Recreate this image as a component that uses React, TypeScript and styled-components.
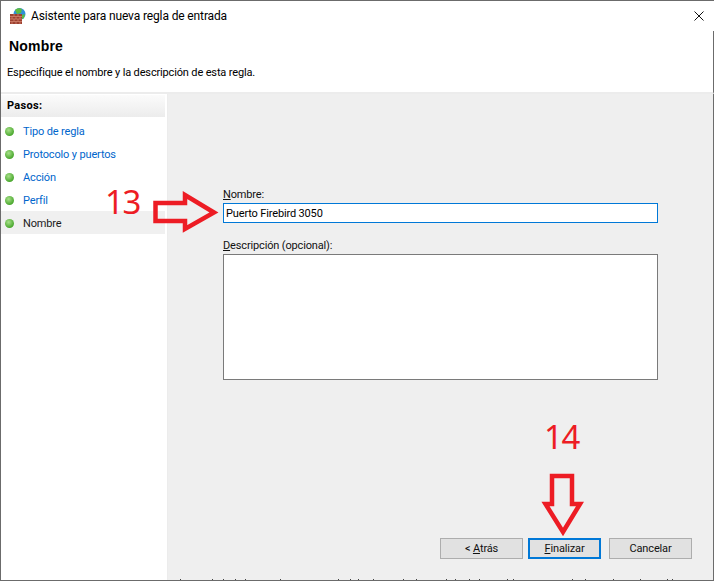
import styled, { createGlobalStyle } from "styled-components";

const Global = createGlobalStyle`
  html, body { margin: 0; padding: 0; background: #fff; }
  #root { width: 714px; height: 581px; }
`;

const Win = styled.div`
  position: relative;
  box-sizing: border-box;
  width: 714px;
  height: 581px;
  border: 1px solid #6b6b6b;
  border-right: none;
  background: #fff;
  display: flex;
  flex-direction: column;
  overflow: hidden;
  font-family: "Roboto", "Liberation Sans", sans-serif;
  font-size: 11px;
  letter-spacing: -0.15px;
  color: #000;
`;

const TitleBar = styled.div`
  height: 30px;
  display: flex;
  align-items: center;
  padding-left: 9px;
  gap: 4px;
`;

const TitleText = styled.span`
  font-size: 12px;
  letter-spacing: -0.13px;
  color: #000;
  flex: 1;
`;

const Close = styled.div`
  width: 30px;
  height: 30px;
  display: flex;
  align-items: center;
  justify-content: center;
`;

const Header = styled.div`
  height: 63px;
  box-sizing: border-box;
  padding: 6px 0 0 8px;
  border-bottom: 2px solid #ececec;
  border-right: 1px solid #6b6b6b;
`;

const Heading = styled.div`
  font-family: "Liberation Sans", sans-serif;
  font-weight: 700;
  font-size: 14px;
  letter-spacing: 0.2px;
  line-height: 18px;
`;

const SubHeading = styled.div`
  margin: 10px 0 0 -2px;
  line-height: 16px;
`;

const Body = styled.div`
  flex: 1;
  display: flex;
  min-height: 0;
  border-right: 1px solid #6b6b6b;
`;

const Side = styled.div`
  width: 164px;
  padding: 1px 2px 0 0;
  border-right: 1px solid #ececec;
`;

const SideTitle = styled.div`
  height: 22px;
  box-sizing: border-box;
  padding: 3px 0 0 6px;
  font-weight: 700;
  letter-spacing: 0.3px;
  line-height: 16px;
  background: linear-gradient(#fbfbfb, #ececec);
`;

const Steps = styled.div`
  padding-top: 2px;
`;

const Step = styled.div<{ $current?: boolean }>`
  box-sizing: border-box;
  height: 23px;
  display: flex;
  align-items: center;
  gap: 9px;
  padding: 2px 0 0 4px;
  background: ${(p) => (p.$current ? "#f0f0f0" : "transparent")};
  color: ${(p) => (p.$current ? "#1a1a1a" : "#0066cc")};
`;

const Dot = styled.span`
  width: 9px;
  height: 9px;
  border-radius: 50%;
  background: radial-gradient(circle at 40% 35%, #a8e08a, #4aa82e 70%);
`;

const Main = styled.div`
  flex: 1;
  background: #efefef;
  display: flex;
  flex-direction: column;
  padding: 93px 0 0 55px;
`;

const Label = styled.label`
  line-height: 16px;
  color: #111;
`;

const NameBox = styled.div`
  box-sizing: border-box;
  width: 435px;
  height: 20px;
  border: 1px solid #0078d7;
  background: #fff;
  padding: 1px 0 0 2px;
  line-height: 17px;
`;

const DescLabel = styled(Label)`
  margin-top: 15px;
`;

const DescBox = styled.div`
  box-sizing: border-box;
  width: 435px;
  height: 126px;
  border: 1px solid #7a7a7a;
  background: #fff;
`;

const Buttons = styled.div`
  display: flex;
  margin: 158px 0 0 217px;
`;

const Btn = styled.div<{ $primary?: boolean }>`
  box-sizing: border-box;
  width: ${(p) => (p.$primary ? "73px" : "83px")};
  height: 21px;
  margin: ${(p) => (p.$primary ? "0 8px 0 5px" : "0")};
  border: ${(p) => (p.$primary ? "2px solid #0078d7" : "1px solid #adadad")};
  background: #e1e1e1;
  display: flex;
  align-items: center;
  justify-content: center;
  white-space: pre;
  color: #111;
`;

const Number = styled.div<{ $x: number; $y: number }>`
  position: absolute;
  left: ${(p) => p.$x}px;
  top: ${(p) => p.$y}px;
  font-family: "Noto Sans", sans-serif;
  font-size: 33px;
  line-height: 40px;
  letter-spacing: -1.5px;
  color: #ed1c24;
`;

const Overlay = styled.svg`
  position: absolute;
  left: -1px;
  top: -1px;
  pointer-events: none;
`;

const Icon = () => (
  <svg width="17" height="16" viewBox="0 0 17 16">
    <circle cx="9.5" cy="6" r="6" fill="#2f8fd8" />
    <path d="M5 2c2-2 5-2 7-1l-1 4-4 1zM12 7l3-1-1 4-2 1z" fill="#5dbb3f" />
    <rect x="0" y="6" width="12" height="10" fill="#9c4030" />
    <path d="M0 8.5h12M0 11h12M0 13.5h12M4 6v2.5M8 6v2.5M2 8.5V11M6 8.5V11M10 8.5V11M4 11v2.5M8 11v2.5M2 13.5V16M6 13.5V16M10 13.5V16" stroke="#d98a74" strokeWidth=".7" fill="none" />
  </svg>
);

const ticks = [180, 212, 223, 235, 245, 280, 338, 350, 358, 373, 403, 416, 446, 455, 469, 479, 507, 513, 572, 585, 613, 640, 667, 672];

export default function App() {
  return (
    <>
      <Global />
      <Win>
        <TitleBar>
          <Icon />
          <TitleText>Asistente para nueva regla de entrada</TitleText>
          <Close>
            <svg width="10" height="10" viewBox="0 0 10 10">
              <path d="M.5.5l9 9M9.5.5l-9 9" stroke="#111" strokeWidth="1" />
            </svg>
          </Close>
        </TitleBar>
        <Header>
          <Heading>Nombre</Heading>
          <SubHeading>Especifique el nombre y la descripción de esta regla.</SubHeading>
        </Header>
        <Body>
          <Side>
            <SideTitle>Pasos:</SideTitle>
            <Steps>
              <Step><Dot />Tipo de regla</Step>
              <Step><Dot />Protocolo y puertos</Step>
              <Step><Dot />Acción</Step>
              <Step><Dot />Perfil</Step>
              <Step $current><Dot />Nombre</Step>
            </Steps>
          </Side>
          <Main>
            <Label><u>N</u>ombre:</Label>
            <NameBox>Puerto Firebird 3050</NameBox>
            <DescLabel><u>D</u>escripción (opcional):</DescLabel>
            <DescBox />
            <Buttons>
              <Btn>&lt; <u>A</u>trás</Btn>
              <Btn $primary><u>F</u>inalizar</Btn>
              <Btn>Cancelar</Btn>
            </Buttons>
          </Main>
        </Body>
        <Number $x={104} $y={181}>13</Number>
        <Number $x={543} $y={416}>14</Number>
        <Overlay width="714" height="581" viewBox="0 0 714 581">
          <path d="M155.5 203H185V195L214 212.5L185 229V221H155.5Z" fill="none" stroke="#ed1c24" strokeWidth="4.5" />
          <path d="M552 476H572V504H580L563 532L545.5 504H552Z" fill="none" stroke="#ed1c24" strokeWidth="4.5" />
          {ticks.map((x) => (
            <rect key={x} x={x} y={579} width={1} height={2} fill="#444" />
          ))}
        </Overlay>
      </Win>
    </>
  );
}
